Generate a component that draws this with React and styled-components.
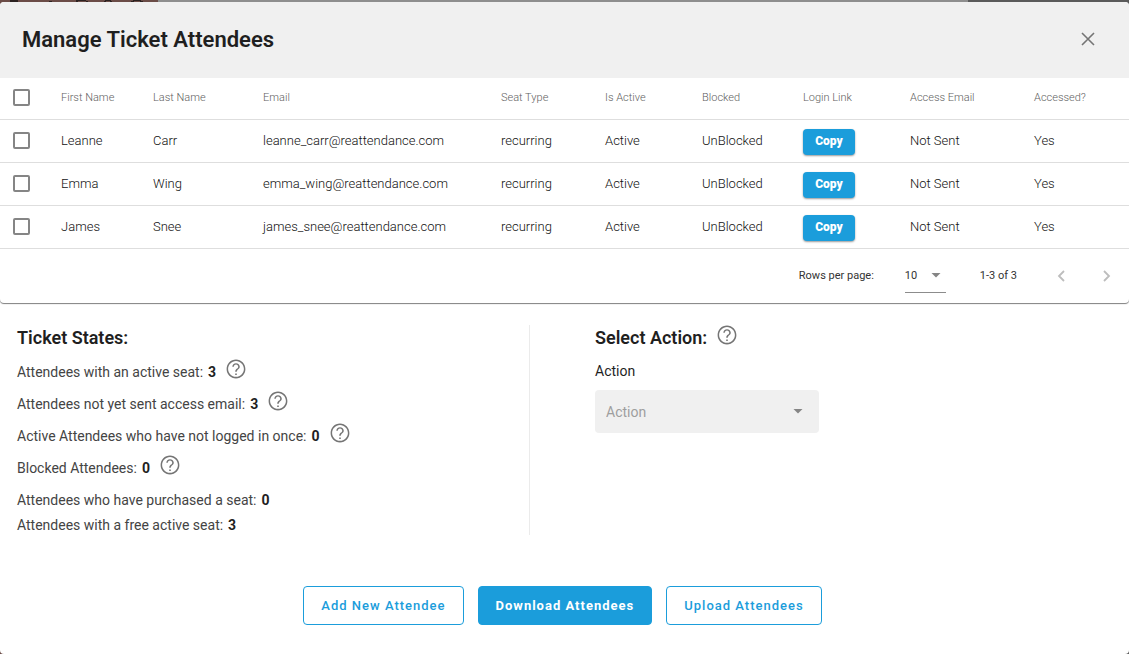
import React, { useState } from "react";
import styled, { createGlobalStyle, css } from "styled-components";

const GlobalStyle = createGlobalStyle`
  * {
    box-sizing: border-box;
  }

  body {
    margin: 0;
    background: linear-gradient(to right, #6b4c47 0 158px, #8e8e8e 158px calc(100% - 161px), #5a5a5a calc(100% - 161px));
    color: #1f1f1f;
    font-family: Roboto, "Liberation Sans", sans-serif;
    font-size: 14px;
  }

  button,
  select {
    font-family: inherit;
  }
`;

const Backdrop = styled.div`
  display: flex;
  flex-direction: column;
  min-height: 100vh;
`;

const BackdropStrip = styled.svg`
  display: block;
  flex: none;
`;

const Dialog = styled.main`
  display: flex;
  flex: 1;
  flex-direction: column;
  border-radius: 4px;
  background: white;
  overflow: hidden;
`;

const DialogHeader = styled.header`
  display: flex;
  align-items: flex-start;
  justify-content: space-between;
  height: 76px;
  padding: 22px 29px 0 22px;
  background: #f0f0f0;
`;

const DialogTitle = styled.h1`
  margin: 0;
  font-size: 22px;
  font-weight: 600;
  line-height: 32px;
`;

const IconButton = styled.button`
  display: flex;
  align-items: center;
  justify-content: center;
  width: 24px;
  height: 24px;
  padding: 0;
  border: 0;
  background: none;
  color: ${(props) => props.$color || "#757575"};
  cursor: pointer;
`;

const CloseButton = styled(IconButton)`
  height: 30px;
`;

const TableCard = styled.section`
  border-radius: 0 0 4px 4px;
  background: white;
  box-shadow: 0 1px 1px rgba(0, 0, 0, 0.5);
`;

const Table = styled.table`
  width: 100%;
  border-collapse: separate;
  border-spacing: 0;
  table-layout: fixed;
`;

const Column = styled.col`
  width: ${(props) => props.$width};
`;

const cell = css`
  padding: 0 0 0 16px;
  border-bottom: 1px solid #dedede;
  text-align: left;
  white-space: nowrap;
`;

const HeadCell = styled.th`
  ${cell}
  height: 42px;
  padding-bottom: 3px;
  color: #616161;
  font-size: 11px;
  font-weight: 300;
`;

const Cell = styled.td`
  ${cell}
  height: 43px;
  padding-bottom: 1px;
  color: #111;
  font-size: 13px;
  font-weight: 300;
`;

const CheckCell = styled(Cell)`
  padding-left: 13px;
`;

const CheckHeadCell = styled(HeadCell)`
  padding-left: 13px;
`;

const Checkbox = styled.input`
  display: block;
  width: 17px;
  height: 17px;
  margin: 0;
  appearance: none;
  border: 2px solid #858585;
  border-radius: 2px;
  background: white;

  &:checked {
    border-color: #1b9ddb;
    background: #1b9ddb;
  }
`;

const CopyButton = styled.button`
  display: block;
  width: 52px;
  height: 26px;
  margin-top: 2px;
  padding: 0 0 1px;
  border: 0;
  border-radius: 4px;
  background: #1b9ddb;
  box-shadow: 0 1px 2px rgba(0, 0, 0, 0.4);
  color: white;
  font-size: 12px;
  font-weight: 900;
  cursor: pointer;
`;

const TableFooter = styled.footer`
  display: flex;
  align-items: center;
  justify-content: flex-end;
  height: 54px;
  padding: 0 10px 1px 0;
  color: #333;
  font-size: 11px;
`;

const PageSizeLabel = styled.label`
  margin-right: 31px;
`;

const PageSizeField = styled.div`
  display: flex;
  align-items: center;
  width: 41px;
  height: 34px;
  margin-right: 34px;
  padding-right: 5px;
  border-bottom: 1px solid #8c8c8c;
`;

const Select = styled.select`
  flex: 1;
  min-width: 0;
  padding: 0;
  border: 0;
  outline: 0;
  appearance: none;
  background: none;
  color: inherit;
  font-size: inherit;
  opacity: 1;
`;

const PageRange = styled.span`
  margin-right: 33px;
`;

const Pager = styled.div`
  display: flex;
  gap: 21px;
`;

const Details = styled.div`
  display: flex;
  padding: 22px 17px 0;
`;

const States = styled.section`
  flex: 0 0 513px;
  height: 210px;
  border-right: 1px solid #ebebeb;
`;

const Actions = styled.section`
  flex: 1;
  padding-left: 65px;
`;

const SectionTitle = styled.h2`
  display: flex;
  gap: 10px;
  margin: 0;
  font-size: 18px;
  font-weight: 600;
  line-height: 26px;
`;

const StateList = styled.ul`
  margin: 4px 0 0;
  padding: 0;
  list-style: none;
`;

const StateItem = styled.li`
  display: flex;
  gap: 5px;
  height: ${(props) => (props.$compact ? "25px" : "32px")};
  color: #444;
  font-size: 14px;
  line-height: 34px;

  strong {
    color: #1f1f1f;
    font-weight: 700;
  }
`;

const HelpButton = styled(IconButton)`
  width: 20px;
  height: 20px;
  margin: ${(props) => (props.$heading ? "0" : "4px 0 0 5px")};
`;

const FieldLabel = styled.label`
  display: block;
  margin-top: 10px;
  font-size: 14px;
  line-height: 20px;
`;

const ActionField = styled.div`
  display: flex;
  align-items: center;
  width: 224px;
  height: 43px;
  margin-top: 9px;
  padding: 0 16px 0 11px;
  border-radius: 4px;
  background: #f0f0f0;
  color: #9e9e9e;
  font-size: 14px;
`;

const ButtonRow = styled.div`
  display: flex;
  justify-content: center;
  gap: 14px;
  margin-top: 51px;
  padding: 0 4px 28px 0;
`;

const Button = styled.button`
  height: 39px;
  padding: 0 17px;
  border: 1px solid #1b9ddb;
  border-radius: 4px;
  background: ${(props) => (props.$primary ? "#1b9ddb" : "white")};
  color: ${(props) => (props.$primary ? "white" : "#1b9ddb")};
  font-size: 13px;
  font-weight: ${(props) => (props.$primary ? 700 : 500)};
  letter-spacing: 1px;
  cursor: pointer;
`;

const columns = [
  { label: "First Name", width: "92px" },
  { label: "Last Name", width: "110px" },
  { label: "Email", width: "auto" },
  { label: "Seat Type", width: "104px" },
  { label: "Is Active", width: "97px" },
  { label: "Blocked", width: "101px" },
  { label: "Login Link", width: "107px" },
  { label: "Access Email", width: "124px" },
  { label: "Accessed?", width: "111px" },
];

const attendees = [
  { firstName: "Leanne", lastName: "Carr", email: "leanne_carr@reattendance.com" },
  { firstName: "Emma", lastName: "Wing", email: "emma_wing@reattendance.com" },
  { firstName: "James", lastName: "Snee", email: "james_snee@reattendance.com" },
];

const states = [
  { label: "Attendees with an active seat:", count: 3, help: true },
  { label: "Attendees not yet sent access email:", count: 3, help: true },
  { label: "Active Attendees who have not logged in once:", count: 0, help: true },
  { label: "Blocked Attendees:", count: 0, help: true },
  { label: "Attendees who have purchased a seat:", count: 0 },
  { label: "Attendees with a free active seat:", count: 3 },
];

const CloseIcon = () => (
  <svg width="14" height="14" viewBox="0 0 14 14" fill="none" stroke="currentColor" strokeWidth="1.6">
    <path d="M1 1l12 12M13 1L1 13" />
  </svg>
);

const CaretIcon = () => (
  <svg width="10" height="5" viewBox="0 0 10 5" fill="#858585">
    <path d="M.5 0h9L5 4.6z" />
  </svg>
);

const ChevronIcon = ({ next }) => (
  <svg width="24" height="24" viewBox="0 0 24 24" fill="none" stroke="currentColor" strokeWidth="1.8">
    <path d={next ? "M9 7l5 5-5 5" : "M14 7l-5 5 5 5"} />
  </svg>
);

const HelpIcon = () => (
  <svg width="20" height="20" viewBox="2 2 20 20" fill="currentColor">
    <path d="M11.2 18h1.6v-1.6h-1.6v1.6zm.8-15.6c-5.3 0-9.4 4.2-9.4 9.6s4.1 9.4 9.4 9.4 9.4-4.1 9.4-9.4-4.1-9.6-9.4-9.6zm0 17.4c-4.3 0-7.9-3.5-7.9-7.8S7.7 4 12 4s7.9 3.7 7.9 8-3.6 7.8-7.9 7.8zM12 6.2c-2.1 0-3.7 1.6-3.7 3.6h1.5c0-1.2 1-2.2 2.2-2.2s2.2 1 2.2 2.2c0 2-3 1.9-3 5h1.6c0-2.2 3-2.5 3-5 0-2-1.7-3.6-3.8-3.6z" />
  </svg>
);

const AttendeeRow = ({ attendee, checked, onToggle }) => (
  <tr>
    <CheckCell>
      <Checkbox
        type="checkbox"
        aria-label={`Select ${attendee.firstName} ${attendee.lastName}`}
        checked={checked}
        onChange={onToggle}
      />
    </CheckCell>
    <Cell>{attendee.firstName}</Cell>
    <Cell>{attendee.lastName}</Cell>
    <Cell>{attendee.email}</Cell>
    <Cell>recurring</Cell>
    <Cell>Active</Cell>
    <Cell>UnBlocked</Cell>
    <Cell>
      <CopyButton type="button">Copy</CopyButton>
    </Cell>
    <Cell>Not Sent</Cell>
    <Cell>Yes</Cell>
  </tr>
);

const AttendeeTable = () => {
  const [selected, setSelected] = useState([]);

  const toggle = (email) =>
    setSelected((current) =>
      current.includes(email) ? current.filter((item) => item !== email) : [...current, email]
    );

  const allSelected = selected.length === attendees.length;

  return (
    <TableCard>
      <Table>
        <colgroup>
          <Column $width="45px" />
          {columns.map((column) => (
            <Column key={column.label} $width={column.width} />
          ))}
        </colgroup>
        <thead>
          <tr>
            <CheckHeadCell>
              <Checkbox
                type="checkbox"
                aria-label="Select all attendees"
                checked={allSelected}
                onChange={() => setSelected(allSelected ? [] : attendees.map((item) => item.email))}
              />
            </CheckHeadCell>
            {columns.map((column) => (
              <HeadCell key={column.label}>{column.label}</HeadCell>
            ))}
          </tr>
        </thead>
        <tbody>
          {attendees.map((attendee) => (
            <AttendeeRow
              key={attendee.email}
              attendee={attendee}
              checked={selected.includes(attendee.email)}
              onToggle={() => toggle(attendee.email)}
            />
          ))}
        </tbody>
      </Table>
      <TableFooter>
        <PageSizeLabel htmlFor="page-size">Rows per page:</PageSizeLabel>
        <PageSizeField>
          <Select id="page-size" defaultValue="10">
            <option>10</option>
            <option>25</option>
            <option>50</option>
          </Select>
          <CaretIcon />
        </PageSizeField>
        <PageRange>1-3 of 3</PageRange>
        <Pager>
          <IconButton type="button" aria-label="Previous page" $color="#bdbdbd" disabled>
            <ChevronIcon />
          </IconButton>
          <IconButton type="button" aria-label="Next page" $color="#bdbdbd" disabled>
            <ChevronIcon next />
          </IconButton>
        </Pager>
      </TableFooter>
    </TableCard>
  );
};

const App = () => {
  return (
    <Backdrop>
      <GlobalStyle />
      <BackdropStrip width="158" height="2" fill="#2c2221" aria-hidden="true">
        <path d="M10 0h8v2h-8zM49 1h3v1h-3zM76 0h10v1h-10zM76 1h2v1h-2zM86 1h2v1h-2zM105 0h6v1h-6zM104 1h2v1h-2zM110 1h2v1h-2zM133 0h8v1h-8zM131 1h3v1h-3zM140 1h3v1h-3z" />
      </BackdropStrip>
      <Dialog>
        <DialogHeader>
          <DialogTitle>Manage Ticket Attendees</DialogTitle>
          <CloseButton type="button" aria-label="Close">
            <CloseIcon />
          </CloseButton>
        </DialogHeader>
        <AttendeeTable />
        <Details>
          <States>
            <SectionTitle>Ticket States:</SectionTitle>
            <StateList>
              {states.map((state) => (
                <StateItem key={state.label} $compact={!state.help}>
                  <span>{state.label}</span>
                  <strong>{state.count}</strong>
                  {state.help && (
                    <HelpButton type="button" aria-label={`About: ${state.label}`}>
                      <HelpIcon />
                    </HelpButton>
                  )}
                </StateItem>
              ))}
            </StateList>
          </States>
          <Actions>
            <SectionTitle>
              Select Action:
              <HelpButton type="button" aria-label="About actions" $heading>
                <HelpIcon />
              </HelpButton>
            </SectionTitle>
            <FieldLabel htmlFor="action">Action</FieldLabel>
            <ActionField>
              <Select id="action" disabled defaultValue="Action">
                <option>Action</option>
              </Select>
              <CaretIcon />
            </ActionField>
          </Actions>
        </Details>
        <ButtonRow>
          <Button type="button">Add New Attendee</Button>
          <Button type="button" $primary>
            Download Attendees
          </Button>
          <Button type="button">Upload Attendees</Button>
        </ButtonRow>
      </Dialog>
    </Backdrop>
  );
};

export default App;
